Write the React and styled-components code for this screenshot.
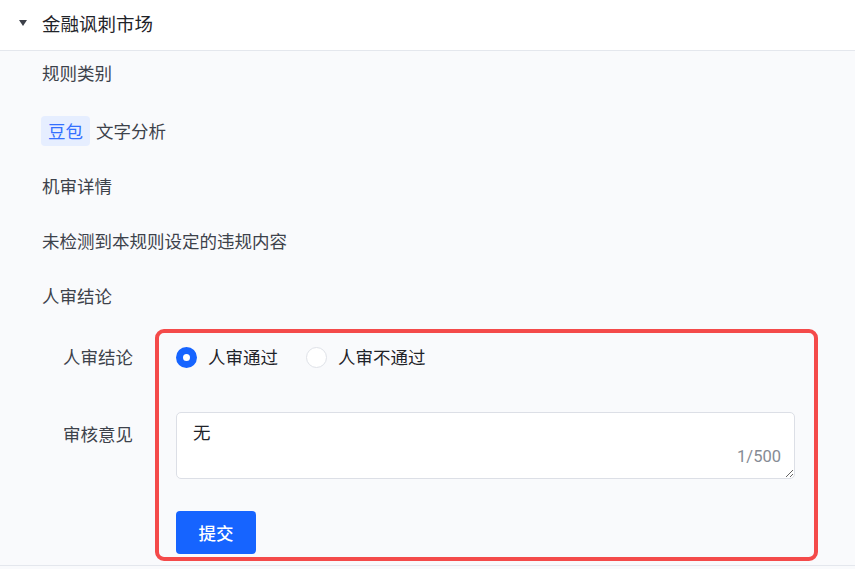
import React from "react";
import styled, { createGlobalStyle } from "styled-components";

const Global = createGlobalStyle`
  html, body { margin: 0; padding: 0; background: #f9fafc; }
  body { font-family: "Noto Sans CJK SC", "Noto Sans", sans-serif; }
  * { box-sizing: border-box; }
`;

const Page = styled.div`
  width: 855px;
  min-height: 569px;
  background: #f9fafc;
`;

const Header = styled.div`
  height: 51px;
  display: flex;
  align-items: center;
  padding: 0 0 4px 19px;
  background: #ffffff;
  border-bottom: 1px solid #e4e7ed;
  gap: 15px;
`;

const Caret = styled.span`
  width: 0;
  height: 0;
  border-left: 4.5px solid transparent;
  border-right: 4.5px solid transparent;
  border-top: 6px solid #3c4049;
`;

const Title = styled.div`
  font-size: 18.5px;
  color: #1f2329;
  line-height: 26px;
`;

const Body = styled.div`
  padding: 10px 37px 4px 42px;
  border-bottom: 1px solid #e4e7ed;
  display: flex;
  flex-direction: column;
`;

const Item = styled.div`
  display: flex;
  align-items: center;
  gap: 6px;
  min-height: 24px;
  font-size: 17.5px;
  line-height: 24px;
  color: #3d424b;
  margin-top: ${(p) => p.$mt ?? 31}px;
`;

const Tag = styled.span`
  display: inline-flex;
  align-items: center;
  height: 30px;
  padding: 0 7px;
  margin-left: -1px;
  border-radius: 4px;
  background: #e6eeff;
  color: #3370ff;
`;

const Form = styled.div`
  margin-top: 21px;
  display: grid;
  grid-template-columns: 113px 1fr;
  grid-template-rows: 83px 67px auto;
`;

const Highlight = styled.div`
  grid-column: 2;
  grid-row: 1 / 4;
  border: 4px solid #f44a4a;
  border-radius: 9px;
  pointer-events: none;
  z-index: 2;
`;

const Label = styled.div`
  grid-column: 1;
  grid-row: ${(p) => p.$row};
  padding: ${(p) => p.$pt}px 0 0 21px;
  font-size: 17.5px;
  line-height: 24px;
  color: #3d424b;
`;

const Cell = styled.div`
  grid-column: 2;
  grid-row: ${(p) => p.$row};
  padding: ${(p) => p.$pt || 0}px 23px ${(p) => p.$pb || 0}px 21px;
  position: relative;
`;

const RadioGroup = styled.div`
  display: flex;
  align-items: center;
  gap: 28px;
  height: 24px;
`;

const RadioOption = styled.label`
  display: flex;
  align-items: center;
  gap: 11px;
  font-size: 17.5px;
  line-height: 24px;
  color: #1f2329;
`;

const RadioDot = styled.span`
  width: 21px;
  height: 21px;
  border-radius: 50%;
  background: #ffffff;
  border: ${(p) => (p.$checked ? "7px solid #1664ff" : "1px solid #dfe2e8")};
`;

const TextBox = styled.textarea`
  display: block;
  width: 100%;
  height: 67px;
  resize: vertical;
  border: 1px solid #dcdfe6;
  border-radius: 5px;
  background: #ffffff;
  padding: 7px 16px;
  font-family: "Noto Sans CJK SC", "Noto Sans", sans-serif;
  font-size: 17.5px;
  line-height: 24px;
  color: #1f2329;
  outline: none;
`;

const Counter = styled.span`
  position: absolute;
  right: 37px;
  bottom: 11px;
  font-size: 16.5px;
  line-height: 22px;
  color: #868b94;
  font-family: Roboto, "Noto Sans", sans-serif;
`;

const Submit = styled.button`
  width: 80px;
  height: 43px;
  border: none;
  border-radius: 4px;
  background: #1664ff;
  color: #ffffff;
  font-family: "Noto Sans CJK SC", "Noto Sans", sans-serif;
  font-size: 17.5px;
  font-weight: 500;
  display: flex;
  align-items: center;
  justify-content: center;
`;

export default function App() {
  return (
    <Page>
      <Global />
      <Header>
        <Caret />
        <Title>金融讽刺市场</Title>
      </Header>
      <Body>
        <Item $mt={0}>规则类别</Item>
        <Item>
          <Tag>豆包</Tag>
          文字分析
        </Item>
        <Item $mt={28}>机审详情</Item>
        <Item>未检测到本规则设定的违规内容</Item>
        <Item>人审结论</Item>
        <Form>
          <Label $row={1} $pt={16}>人审结论</Label>
          <Cell $row={1} $pt={16}>
            <RadioGroup>
              <RadioOption>
                <RadioDot $checked />
                人审通过
              </RadioOption>
              <RadioOption>
                <RadioDot />
                人审不通过
              </RadioOption>
            </RadioGroup>
          </Cell>
          <Label $row={2} $pt={10}>审核意见</Label>
          <Cell $row={2}>
            <TextBox value="无" readOnly />
            <Counter>1/500</Counter>
          </Cell>
          <Cell $row={3} $pt={32} $pb={7}>
            <Submit>提交</Submit>
          </Cell>
          <Highlight />
        </Form>
      </Body>
    </Page>
  );
}
